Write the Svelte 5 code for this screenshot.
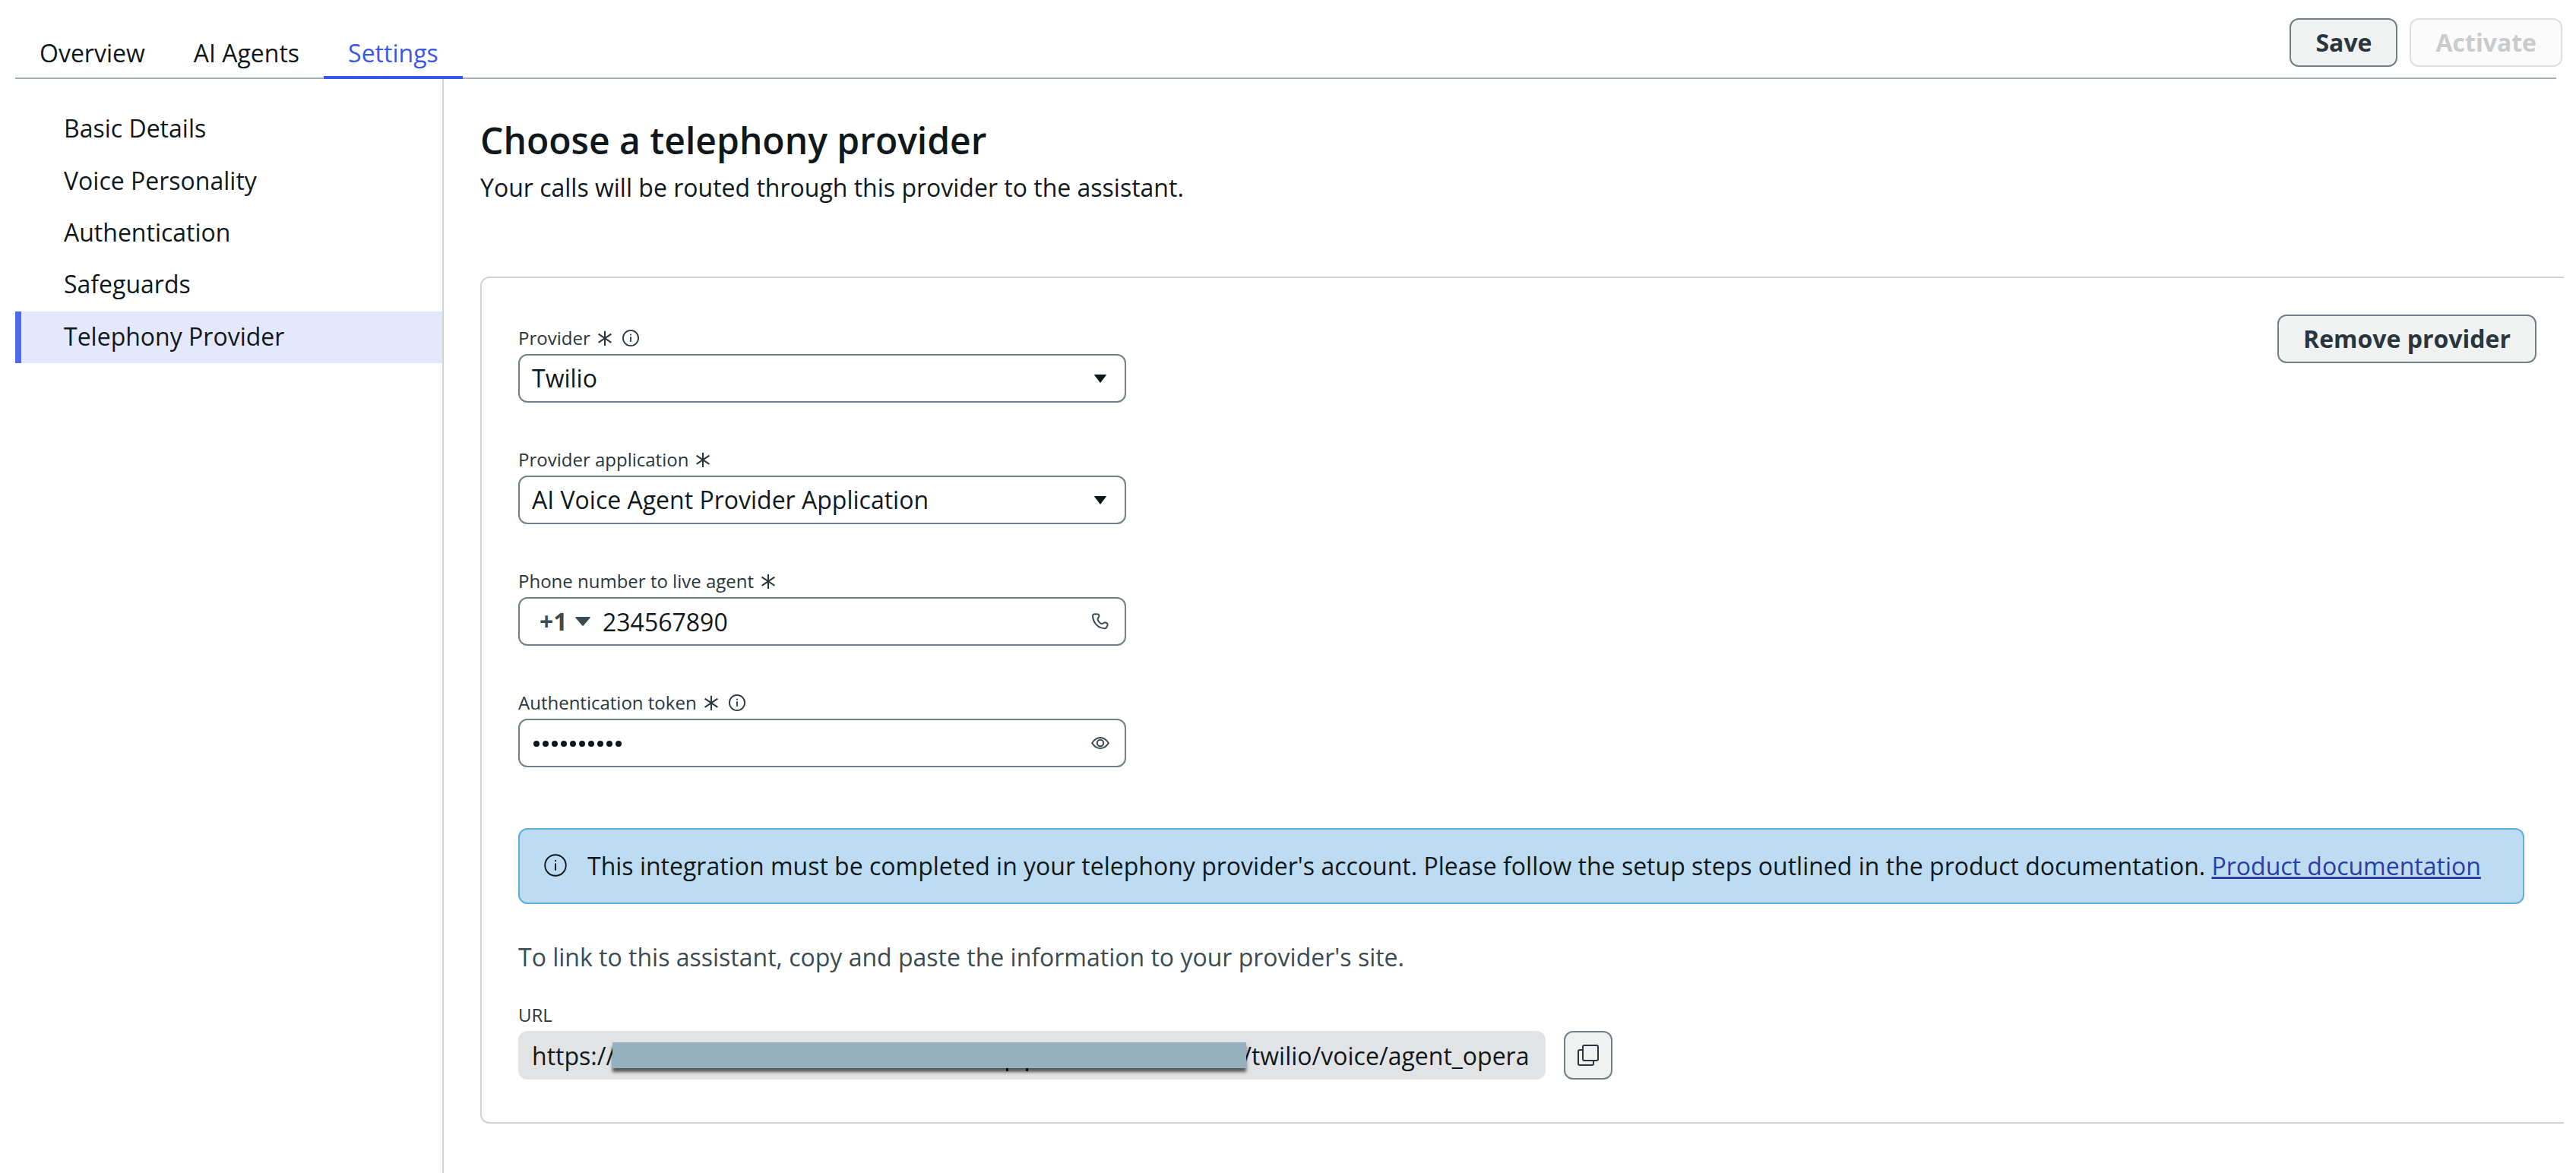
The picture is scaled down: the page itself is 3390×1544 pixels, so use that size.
<script>
  const tabs = ['Overview', 'AI Agents', 'Settings'];
  const activeTab = 'Settings';
  const sections = [
    'Basic Details',
    'Voice Personality',
    'Authentication',
    'Safeguards',
    'Telephony Provider'
  ];
  const activeSection = 'Telephony Provider';
</script>

{#snippet star()}
  <svg class="star" width="18" height="20" viewBox="0 0 18 20">
    <path d="M9 0.8V20M0.6 4.6L17.4 15.8M0.6 15.8L17.4 4.6" />
  </svg>
{/snippet}

{#snippet info(size, weight)}
  <svg class="info" width={size} height={size} viewBox="0 0 22 22">
    <circle cx="11" cy="11" r="10.1" stroke-width={weight} />
    <path d="M11 9.2V16" stroke-width={weight} />
    <path d="M11 5.8V7.4" stroke-width={weight} />
  </svg>
{/snippet}

{#snippet caret()}
  <svg class="caret" width="16" height="11" viewBox="0 0 16 11">
    <path d="M0.6 0H15.4Q16.2 0.2 15.6 1L8.8 10Q8 11 7.2 10L0.4 1Q-0.2 0.2 0.6 0Z" />
  </svg>
{/snippet}

<div class="page">
  <header>
    <nav class="tabs">
      {#each tabs as tab}
        <a class="tab" class:active={tab === activeTab}>{tab}</a>
      {/each}
    </nav>
    <div class="actions">
      <button>Save</button>
      <button class="disabled">Activate</button>
    </div>
  </header>

  <div class="body">
    <aside>
      {#each sections as section}
        <a class="section" class:active={section === activeSection}>{section}</a>
      {/each}
    </aside>

    <main>
      <h1>Choose a telephony provider</h1>
      <p class="lead">Your calls will be routed through this provider to the assistant.</p>

      <div class="card">
        <div class="top">
          <div class="fields">
            <div class="field">
              <div class="label">Provider {@render star()}{@render info(22, 1.8)}</div>
              <div class="control"><span class="value">Twilio</span>{@render caret()}</div>
            </div>
            <div class="field">
              <div class="label">Provider application {@render star()}</div>
              <div class="control">
                <span class="value">AI Voice Agent Provider Application</span>{@render caret()}
              </div>
            </div>
            <div class="field">
              <div class="label">Phone number to live agent {@render star()}</div>
              <div class="control">
                <span class="prefix"><b>+1</b>
                  <svg class="prefix-caret" width="20" height="12" viewBox="0 0 20 12"><path d="M1 0H19Q20.4 0.2 19.4 1.4L11 11.2Q10 12.4 9 11.2L0.6 1.4Q-0.4 0.2 1 0Z" /></svg>
                </span>
                <span class="value number">234567890</span>
                <svg class="icon" width="24" height="24" viewBox="0 0 24 24">
                  <path d="M3.4 2.6L6.2 2.2Q7.6 2.1 9.4 2.6Q10.6 3.2 10.4 5L9.6 6.8Q8.4 8 8.6 9.6Q9.6 13 12.6 14.6Q14.4 15.6 15.6 14.4L17.4 13.6Q19.4 13.2 21 14.6Q22.2 15.6 21.4 17.4L20.2 19.8Q19.4 21.4 17.6 21.2Q10.6 20.8 6 15.4Q2.2 10.6 2 4.4Q2 2.9 3.4 2.6Z" />
                </svg>
              </div>
            </div>
            <div class="field">
              <div class="label">Authentication token {@render star()}{@render info(22, 1.8)}</div>
              <div class="control">
                <span class="value dots">{#each Array(10) as _}<i></i>{/each}</span>
                <svg class="icon" width="24" height="24" viewBox="0 0 24 24">
                  <path d="M1.2 12Q5.4 4.9 12 4.9T22.8 12Q18.6 19.1 12 19.1T1.2 12Z" />
                  <circle cx="12" cy="12" r="4.2" />
                </svg>
              </div>
            </div>
          </div>
          <button>Remove provider</button>
        </div>

        <div class="notice">
          {@render info(30, 1.4)}
          <span>This integration must be completed in your telephony provider's account. Please follow the setup steps outlined in the product documentation. <a class="link">Product documentation</a></span>
        </div>

        <p class="hint">To link to this assistant, copy and paste the information to your provider's site.</p>

        <div class="label url-label">URL</div>
        <div class="url-row">
          <div class="url"><span class="scheme">https://</span><span class="mask"></span><span class="path">/twilio/voice/agent_opera</span></div>
          <button class="copy">
            <svg width="28" height="28" viewBox="0 0 28 28">
              <rect x="7" y="1" width="20" height="20" rx="2" />
              <path d="M7 7H3Q1 7 1 9V25Q1 27 3 27H19Q21 27 21 25V21" />
            </svg>
          </button>
        </div>
      </div>
    </main>
  </div>
</div>

<style>
  :global(body) {
    background: #fff;
  }
  .page {
    box-sizing: border-box;
    width: 3390px;
    height: 1544px;
    overflow: hidden;
    display: flex;
    flex-direction: column;
    padding-left: 20px;
    font-family: 'Open Sans', 'Noto Sans', sans-serif;
    font-size: 32px;
    line-height: 44px;
    color: #10181b;
  }
  .page * {
    box-sizing: border-box;
  }
  header {
    flex: none;
    display: flex;
    justify-content: space-between;
    height: 104px;
    padding-right: 18px;
    background: linear-gradient(#a5adb5, #a5adb5) 0 102px / 3344px 2px no-repeat;
  }
  .tabs {
    display: flex;
    align-items: flex-end;
  }
  .tab {
    height: 56px;
    padding: 0 32px;
    white-space: nowrap;
  }
  .tab.active {
    color: #3b57e9;
    border-bottom: 4px solid #3b57e9;
  }
  .actions {
    display: flex;
    gap: 16px;
    padding-top: 24px;
  }
  button {
    flex: none;
    height: 64px;
    padding: 0 32px;
    border: 2px solid #737f86;
    border-radius: 12px;
    background: #f0f2f2;
    color: #2a363d;
    font: 700 32px/44px 'Open Sans', 'Noto Sans', sans-serif;
    white-space: nowrap;
  }
  button.disabled {
    background: #fbfbfb;
    border-color: #dbe0e0;
    color: #c9cbcc;
  }
  .body {
    flex: 1;
    display: flex;
    min-height: 0;
  }
  aside {
    width: 564px;
    flex: none;
    border-right: 2px solid #cfd4d8;
    padding-top: 32.15px;
  }
  .section {
    display: block;
    height: 68.4px;
    line-height: 66px;
    padding-left: 64px;
  }
  .section.active {
    height: 68px;
    background: #e4e8fd;
    border-left: 8px solid #4f6bed;
    padding-left: 56px;
  }
  main {
    flex: 1;
    min-width: 0;
    padding: 48px 16px 0 48px;
  }
  h1 {
    margin: 0;
    font-size: 48px;
    font-weight: 600;
    line-height: 66px;
  }
  p {
    margin: 0;
  }
  .lead {
    margin-top: 7px;
  }
  .card {
    margin-top: 95px;
    height: 1115px;
    border: 2px solid #cfd4d8;
    border-right: 0;
    border-radius: 12px 0 0 12px;
    padding: 48px 36px 0 48px;
  }
  .top {
    display: flex;
    justify-content: space-between;
    align-items: flex-start;
  }
  .fields {
    width: 800px;
    padding-top: 15px;
  }
  .field {
    height: 160px;
  }
  .label {
    display: flex;
    align-items: center;
    height: 32px;
    font-size: 24px;
    line-height: 32px;
    color: #2a363d;
    white-space: nowrap;
  }
  .control {
    display: flex;
    align-items: center;
    height: 64px;
    margin-top: 5px;
    padding: 0 20px 0 16px;
    border: 2px solid #737f86;
    border-radius: 12px;
  }
  .value {
    flex: 1;
  }
  .number {
    padding-top: 2px;
  }
  svg {
    flex: none;
    fill: none;
  }
  .star {
    margin-left: 10px;
    stroke: #2a363d;
    stroke-width: 2;
  }
  .info {
    margin-left: 14px;
    stroke: #2a363d;
  }
  .caret {
    fill: #10181b;
    margin-right: 4px;
  }
  .prefix {
    display: flex;
    align-items: center;
    margin: 0 16px 0 10px;
    color: #3c4a52;
  }
  .prefix b {
    width: 47px;
    font-weight: 700;
  }
  .prefix-caret {
    fill: #3c4a52;
  }
  .icon {
    stroke: #3c4a52;
    stroke-width: 2;
  }
  .dots {
    display: flex;
    gap: 4px;
    padding: 2px 0 0 2px;
  }
  .dots i {
    width: 8px;
    height: 8px;
    border-radius: 50%;
    background: #10181b;
  }
  .notice {
    display: flex;
    align-items: center;
    width: 2640px;
    height: 100px;
    margin-top: 21px;
    padding-left: 32px;
    border: 2px solid #5faee0;
    border-radius: 12px;
    background: #bddcf2;
    white-space: nowrap;
  }
  .notice .info {
    margin: -2px 27px 0 0;
    stroke: #10181b;
  }
  .link {
    color: #2b3ea5;
    text-decoration: underline;
    text-decoration-thickness: 3px;
  }
  .hint {
    margin-top: 48px;
    color: #3c4a52;
  }
  .url-label {
    margin-top: 38px;
  }
  .url-row {
    display: flex;
    gap: 24px;
    margin-top: 5px;
  }
  .url {
    display: flex;
    align-items: center;
    width: 1352px;
    height: 64px;
    padding-left: 18px;
    border-radius: 12px;
    background: #e2e3e5;
    white-space: nowrap;
    overflow: hidden;
  }
  .scheme,
  .path {
    padding-top: 2px;
  }
  .mask {
    width: 834px;
    height: 34px;
    margin-left: -3px;
    background: #95b1bf;
    box-shadow: 0 5px 4px rgba(0, 0, 0, 0.62);
    position: relative;
  }
  /* descender tips of the hidden host name, showing under the mask */
  .mask::after {
    content: '';
    position: absolute;
    left: 518px;
    top: 34px;
    width: 23px;
    height: 4px;
    border: solid #07090b;
    border-width: 0 3px;
  }
  .path {
    margin-left: -5px;
  }
  .copy {
    width: 64px;
    padding: 0;
    display: grid;
    place-items: center;
  }
  .copy svg {
    stroke: #2a363d;
    stroke-width: 2;
  }
</style>
